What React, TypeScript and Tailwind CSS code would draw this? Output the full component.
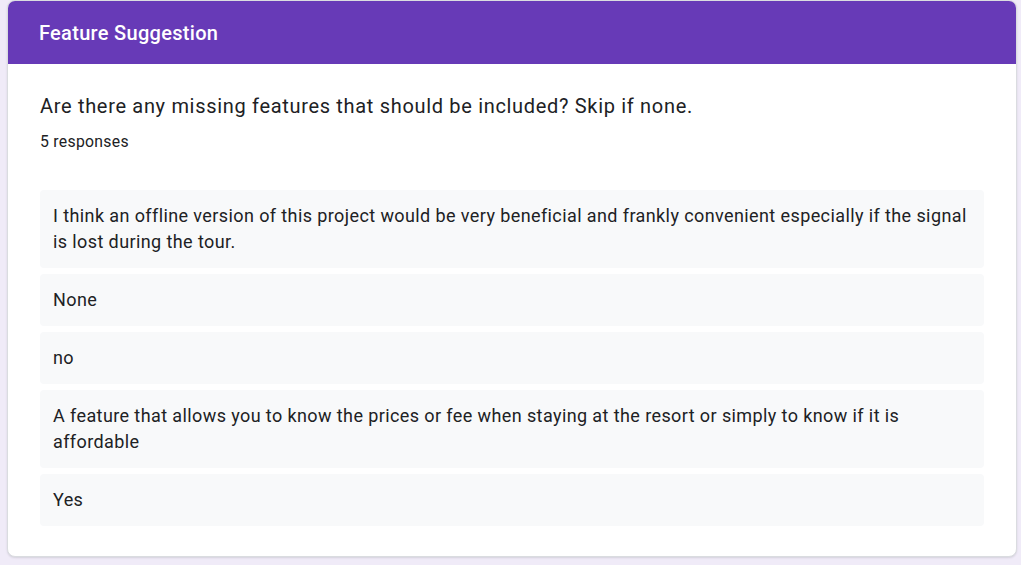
import React from 'react';

const responses = [
  'I think an offline version of this project would be very beneficial and frankly convenient especially if the signal is lost during the tour.',
  'None',
  'no',
  'A feature that allows you to know the prices or fee when staying at the resort or simply to know if it is affordable',
  'Yes',
];

const App: React.FC = () => {
  return (
    <div className="min-h-[565px] w-full bg-[#f0ebf8]" style={{ fontFamily: 'Roboto, "Liberation Sans", sans-serif' }}>
      <div className="ml-[7px] w-[1010px] overflow-hidden rounded-lg border border-[#dadce0] bg-white shadow-[0_1px_2px_rgba(60,64,67,0.15)]">
        <div className="flex h-[63px] items-center bg-[#673ab7] px-[31px] text-[20px] font-medium tracking-[0.3px] text-white">
          Feature Suggestion
        </div>
        <div className="px-[32px] pb-[30px] pt-[28px]">
          <h2 className="text-[20px] leading-[28px] tracking-[0.68px] text-[#202124]">
            Are there any missing features that should be included? Skip if none.
          </h2>
          <p className="mt-[12px] text-[15.75px] leading-[20px] tracking-[0.3px] text-[#202124]">5 responses</p>
          <div className="mt-[38px] flex flex-col gap-[6px]">
            {responses.map((text, idx) => (
              <div key={idx} className="rounded-[4px] bg-[#f8f9fa] px-[13px] py-[13px] text-[18px] leading-[26px] tracking-[0.4px] text-[#202124]">
                {text}
              </div>
            ))}
          </div>
        </div>
      </div>
    </div>
  );
};

export default App;
